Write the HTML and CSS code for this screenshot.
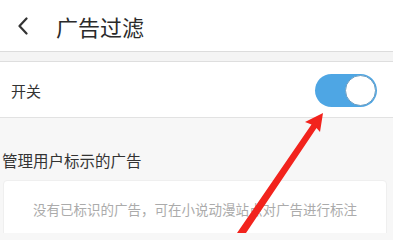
FILE: index.html
```html
<!DOCTYPE html>
<html lang="zh-CN">
<head>
<meta charset="utf-8">
<title>广告过滤</title>
<link rel="stylesheet" href="styles.css">
</head>
<body>
<div class="page">
  <header class="header">
    <svg class="back" width="12" height="18" viewBox="0 0 12 18"><path d="M9.5 1.5 L2.5 9 L9.5 16.5" fill="none" stroke="#333" stroke-width="2.2" stroke-linecap="round" stroke-linejoin="round"/></svg>
    <h1 class="title">广告过滤</h1>
  </header>
  <div class="spacer"></div>
  <div class="row">
    <span class="row-label">开关</span>
    <div class="switch"><div class="knob"></div></div>
  </div>
  <div class="section">
    <div class="section-title">管理用户标示的广告</div>
    <div class="card">没有已标识的广告，可在小说动漫站点对广告进行标注</div>
  </div>
  <svg class="arrow" width="393" height="233" viewBox="0 0 393 233">
    <polygon points="323,113 305,122 311.5,124.5 237,233 246,233 316.5,128 320,132" fill="#f2231d"/>
  </svg>
</div>
</body>
</html>
```
FILE: styles.css
```css
html, body {
  margin: 0;
  padding: 0;
}
body {
  background: #f7f7f7;
  font-family: "Noto Sans CJK SC", "Noto Sans", sans-serif;
  color: #333;
  width: 393px;
  height: 233px;
  overflow: hidden;
}
.page {
  position: relative;
  width: 393px;
  height: 233px;
  overflow: hidden;
}
.header {
  height: 51px;
  background: #fff;
  border-bottom: 1px solid #dcdcdc;
  display: flex;
  align-items: center;
  padding-left: 17px;
}
.back {
  display: block;
  margin-top: 1px;
}
.title {
  margin: 0 0 0 27px;
  font-size: 22px;
  font-weight: normal;
  color: #2a2a2a;
  line-height: 28px;
}
.spacer {
  height: 9px;
  background: #f4f4f4;
  border-bottom: 1px solid #dedede;
}
.row {
  height: 55px;
  background: #fff;
  border-bottom: 1px solid #e2e2e2;
  display: flex;
  align-items: center;
  justify-content: space-between;
  padding: 0 16px 0 11px;
}
.row-label {
  font-size: 15px;
  color: #333;
  line-height: 20px;
  margin-top: 3px;
}
.switch {
  width: 62px;
  height: 33px;
  border-radius: 17px;
  background: #4ea6e4;
  display: flex;
  align-items: center;
  justify-content: flex-end;
  padding-right: 1px;
  box-sizing: border-box;
  margin-top: 1px;
}
.knob {
  width: 29px;
  height: 29px;
  border-radius: 50%;
  background: #fff;
  border: 1px solid #6f9fc2;
}
.section {
  padding: 31px 6px 0 3px;
}
.section-title {
  font-size: 15.5px;
  line-height: 22px;
  color: #333;
  margin-left: -1px;
}
.card {
  margin-top: 9px;
  background: #fff;
  border: 1px solid #efefef;
  border-radius: 4px;
  padding-top: 19px;
  height: 60px;
  text-align: center;
  font-size: 13.5px;
  line-height: 18px;
  color: #ababab;
}
.arrow {
  position: absolute;
  left: 0;
  top: 0;
  pointer-events: none;
}
```
